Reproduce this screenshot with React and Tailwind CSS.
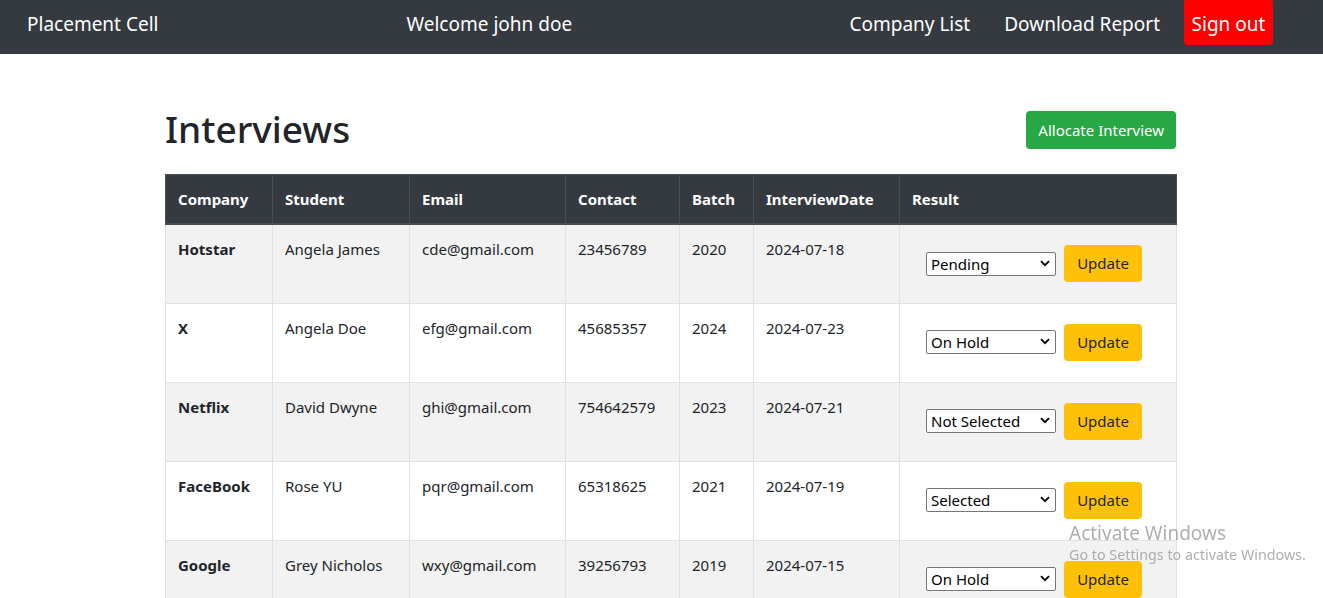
import React from 'react'

const ROWS = [
  { company: 'Hotstar', student: 'Angela James', email: 'cde@gmail.com', contact: '23456789', batch: '2020', date: '2024-07-18', result: 'Pending' },
  { company: 'X', student: 'Angela Doe', email: 'efg@gmail.com', contact: '45685357', batch: '2024', date: '2024-07-23', result: 'On Hold' },
  { company: 'Netflix', student: 'David Dwyne', email: 'ghi@gmail.com', contact: '754642579', batch: '2023', date: '2024-07-21', result: 'Not Selected' },
  { company: 'FaceBook', student: 'Rose YU', email: 'pqr@gmail.com', contact: '65318625', batch: '2021', date: '2024-07-19', result: 'Selected' },
  { company: 'Google', student: 'Grey Nicholos', email: 'wxy@gmail.com', contact: '39256793', batch: '2019', date: '2024-07-15', result: 'On Hold' },
]

const RESULTS = ['Pending', 'Selected', 'Not Selected', 'On Hold', 'Did not Attempt']

const HEADERS = ['Company', 'Student', 'Email', 'Contact', 'Batch', 'InterviewDate', 'Result']
const WIDTHS = ['w-[107px]', 'w-[137px]', 'w-[156px]', 'w-[114px]', 'w-[74px]', 'w-[146px]', 'w-[277px]']

function ResultSelect({ value }) {
  return (
    <div className="relative w-[130px] h-[24px]">
      <select
        defaultValue={value}
        className="appearance-none w-full h-full border border-[#767676] rounded-[2px] bg-white pl-[4px] text-[15px] leading-[22px] text-black"
      >
        {RESULTS.map((r) => (
          <option key={r}>{r}</option>
        ))}
      </select>
      <svg className="absolute right-[6px] top-[8px] pointer-events-none" width="10" height="7" viewBox="0 0 10 7">
        <path d="M1 1.2 L5 5.2 L9 1.2" fill="none" stroke="#000" strokeWidth="1.8" />
      </svg>
    </div>
  )
}

export default function App() {
  return (
    <div className="min-h-screen bg-white text-[#212529] font-['Segoe_UI','Noto_Sans',sans-serif]">
      <nav className="h-[54px] bg-[#343a40] flex items-start text-white text-[19px] leading-[26px]">
        <span className="ml-[27px] mt-[11px]">Placement Cell</span>
        <span className="ml-[248px] mt-[11px]">Welcome john doe</span>
        <div className="ml-auto mr-[50px] flex items-start h-full">
          <a className="mt-[11px]">Company List</a>
          <a className="mt-[11px] ml-[34px]">Download Report</a>
          <button className="ml-[24px] h-[45px] w-[89px] bg-[#ff0000] text-white rounded-b-[4px] rounded-t-[2px] text-[19px] leading-[26px] pt-[2px]">
            Sign out
          </button>
        </div>
      </nav>

      <main className="ml-[165px] w-[1011px] pt-[51px]">
        <div className="flex items-center justify-between h-[48px]">
          <h1 className="text-[37px] font-medium leading-[48px]">Interviews</h1>
          <button className="bg-[#28a745] text-white rounded-[4px] px-[12px] h-[38px] text-[15px] mt-[2px]">
            Allocate Interview
          </button>
        </div>

        <table className="mt-[21px] w-full table-fixed border-collapse border border-[#dee2e6] text-[15px]">
          <thead>
            <tr className="bg-[#343a40] text-white">
              {HEADERS.map((h, i) => (
                <th
                  key={h}
                  className={`${WIDTHS[i]} text-left font-bold px-[12px] py-[12px] leading-[24px] border border-[#454d55] border-b-2`}
                >
                  {h}
                </th>
              ))}
            </tr>
          </thead>
          <tbody>
            {ROWS.map((r, i) => (
              <tr key={i} className={i % 2 === 0 ? 'bg-[#f2f2f2]' : 'bg-white'}>
                <td className="align-top h-[79px] px-[12px] py-[12px] leading-[24px] font-bold border border-[#dee2e6]">{r.company}</td>
                <td className="align-top px-[12px] py-[12px] leading-[24px] border border-[#dee2e6]">{r.student}</td>
                <td className="align-top px-[12px] py-[12px] leading-[24px] border border-[#dee2e6]">{r.email}</td>
                <td className="align-top px-[12px] py-[12px] leading-[24px] border border-[#dee2e6]">{r.contact}</td>
                <td className="align-top px-[12px] py-[12px] leading-[24px] border border-[#dee2e6]">{r.batch}</td>
                <td className="align-top px-[12px] py-[12px] leading-[24px] border border-[#dee2e6]">{r.date}</td>
                <td className="align-top px-[12px] py-[12px] border border-[#dee2e6]">
                  <div className="flex items-center gap-[8px] ml-[14px] mt-[8px]">
                    <ResultSelect value={r.result} />
                    <button className="bg-[#ffc107] text-[#212529] rounded-[4px] w-[78px] h-[37px] text-[15px]">
                      Update
                    </button>
                  </div>
                </td>
              </tr>
            ))}
          </tbody>
        </table>
      </main>

      <div className="fixed left-[1069px] top-[520px] text-[#9a9a9a]/80 pointer-events-none">
        <div className="text-[19px] leading-[26px]">Activate Windows</div>
        <div className="text-[14.3px] leading-[18px]">Go to Settings to activate Windows.</div>
      </div>
    </div>
  )
}
